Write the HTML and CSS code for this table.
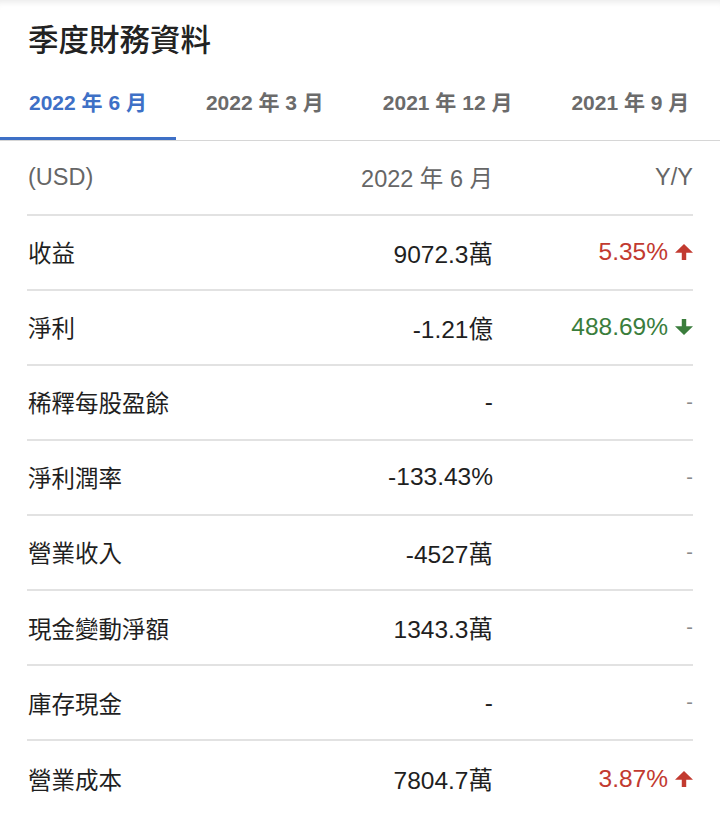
FILE: index.html
```html
<!DOCTYPE html>
<html lang="zh-Hant">
<head>
<meta charset="utf-8">
<link rel="stylesheet" href="styles.css">
</head>
<body>
<div class="card">
  <h1 class="title">季度財務資料</h1>
  <div class="tabs">
    <div class="tab active">2022 年 6 月</div>
    <div class="tab">2022 年 3 月</div>
    <div class="tab">2021 年 12 月</div>
    <div class="tab">2021 年 9 月</div>
  </div>
  <div class="table">
    <div class="row head">
      <div class="label">(USD)</div>
      <div class="val">2022 年 6 月</div>
      <div class="yoy">Y/Y</div>
    </div>
    <div class="row">
      <div class="label">收益</div>
      <div class="val">9072.3萬</div>
      <div class="yoy up">5.35%<svg class="arrow" viewBox="0 0 17 15"><polygon points="8.5,0 17,8.2 10.6,8.2 10.6,15 6.4,15 6.4,8.2 0,8.2"/></svg></div>
    </div>
    <div class="row">
      <div class="label">淨利</div>
      <div class="val">-1.21億</div>
      <div class="yoy down">488.69%<svg class="arrow" viewBox="0 0 17 15"><polygon points="8.5,15 17,6.8 10.6,6.8 10.6,0 6.4,0 6.4,6.8 0,6.8"/></svg></div>
    </div>
    <div class="row">
      <div class="label">稀釋每股盈餘</div>
      <div class="val">-</div>
      <div class="yoy dash">-</div>
    </div>
    <div class="row">
      <div class="label">淨利潤率</div>
      <div class="val">-133.43%</div>
      <div class="yoy dash">-</div>
    </div>
    <div class="row">
      <div class="label">營業收入</div>
      <div class="val">-4527萬</div>
      <div class="yoy dash">-</div>
    </div>
    <div class="row">
      <div class="label">現金變動淨額</div>
      <div class="val">1343.3萬</div>
      <div class="yoy dash">-</div>
    </div>
    <div class="row">
      <div class="label">庫存現金</div>
      <div class="val">-</div>
      <div class="yoy dash">-</div>
    </div>
    <div class="row last">
      <div class="label">營業成本</div>
      <div class="val">7804.7萬</div>
      <div class="yoy up">3.87%<svg class="arrow" viewBox="0 0 17 15"><polygon points="8.5,0 17,8.2 10.6,8.2 10.6,15 6.4,15 6.4,8.2 0,8.2"/></svg></div>
    </div>
  </div>
</div>
</body>
</html>
```

FILE: styles.css
```css
html, body {
  margin: 0;
  padding: 0;
  background: #ffffff;
}

body {
  font-family: "Liberation Sans", "Noto Sans CJK TC", sans-serif;
  color: #1f1f1f;
}

.card {
  width: 720px;
  height: 816px;
  overflow: hidden;
  box-shadow: inset 0 7px 6px -5px rgba(0, 0, 0, 0.09);
}

.title {
  margin: 0;
  padding: 20px 0 0 28px;
  height: 40px;
  line-height: 40px;
  font-size: 30.5px;
  font-weight: 500;
  color: #222222;
}

.tabs {
  display: flex;
  gap: 1px;
  height: 80px;
  border-bottom: 1px solid #d6d6d6;
}

.tab {
  padding: 2px 29px 0;
  display: flex;
  align-items: center;
  font-size: 21px;
  font-weight: 700;
  color: #6b6b6b;
  white-space: nowrap;
}

.tab.active {
  color: #3e70c6;
  box-shadow: inset 0 -3px 0 #3e70c6;
}

.table {
  margin: 0 27px;
}

.row {
  display: grid;
  grid-template-columns: 1fr 200px 200px;
  align-items: center;
  height: 75.1px;
  box-sizing: border-box;
  border-bottom: 2px solid #e2e2e2;
  font-size: 24.5px;
}

.row.last {
  border-bottom: none;
}

.row.head {
  color: #666666;
  font-size: 23.5px;
  height: 74.5px;
}

.label {
  padding-left: 1px;
  font-size: 23.5px;
  white-space: nowrap;
}

.val {
  text-align: right;
  white-space: nowrap;
}

.yoy {
  display: flex;
  justify-content: flex-end;
  align-items: center;
  white-space: nowrap;
}

.up {
  color: #c23a30;
}

.down {
  color: #3a7d3c;
}

.dash {
  color: #8a8a8a;
  font-size: 20px;
}

.arrow {
  width: 18px;
  height: 16px;
  margin-left: 7px;
  fill: currentColor;
}
```
